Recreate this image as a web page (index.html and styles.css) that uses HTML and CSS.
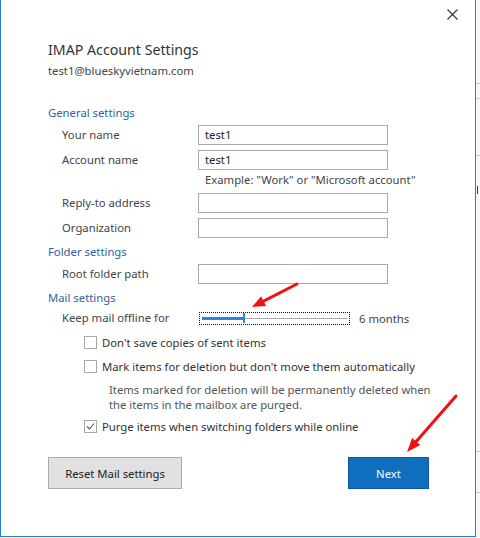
FILE: index.html
```html
<!DOCTYPE html>
<html>
<head>
<meta charset="utf-8">
<link rel="stylesheet" href="styles.css">
</head>
<body>
<div class="screen">
  <div class="dialog">
    <div class="topbar">
      <svg class="close" width="11" height="11" viewBox="0 0 11 11"><path d="M0.5 0.5 L10.5 10.5 M10.5 0.5 L0.5 10.5" stroke="#333" stroke-width="1.1" fill="none"/></svg>
    </div>
    <div class="content">
      <h1 class="title">IMAP Account Settings</h1>
      <div class="email">test1@blueskyvietnam.com</div>

      <div class="section sec-general">General settings</div>
      <div class="field first"><span class="label">Your name</span><div class="input">test1</div></div>
      <div class="field"><span class="label">Account name</span><div class="input">test1</div></div>
      <div class="hint">Example: "Work" or "Microsoft account"</div>
      <div class="field"><span class="label">Reply-to address</span><div class="input"></div></div>
      <div class="field"><span class="label">Organization</span><div class="input"></div></div>

      <div class="section">Folder settings</div>
      <div class="field first"><span class="label">Root folder path</span><div class="input"></div></div>

      <div class="section">Mail settings</div>
      <div class="slider-row">
        <span class="label">Keep mail offline for</span>
        <div class="slider">
          <div class="fill"></div><div class="thumb"></div><div class="track"></div>
        </div>
        <span class="value">6 months</span>
      </div>
      <div class="check first-check"><span class="box"></span><span>Don't save copies of sent items</span></div>
      <div class="check"><span class="box"></span><span>Mark items for deletion but don't move them automatically</span></div>
      <div class="note"><div>Items marked for deletion will be permanently deleted when</div><div>the items in the mailbox are purged.</div></div>
      <div class="check checked"><span class="box"><svg width="11" height="11" viewBox="0 0 11 11"><path d="M2 5.5 L4.5 8 L9 2.5" stroke="#555" stroke-width="1.1" fill="none"/></svg></span><span>Purge items when switching folders while online</span></div>

      <div class="buttons">
        <button class="btn reset">Reset Mail settings</button>
        <button class="btn next">Next</button>
      </div>
    </div>
  </div>
  <div class="behind"></div>
  <svg class="annotations" width="480" height="538" viewBox="0 0 480 538">
    <line x1="297" y1="284" x2="263.6" y2="301.1" stroke="#f21010" stroke-width="3" stroke-linecap="round"/>
    <polygon points="252,307 266.1,306 261.1,296.2" fill="#f21010"/>
    <line x1="456" y1="396" x2="416.2" y2="441.5" stroke="#f21010" stroke-width="3" stroke-linecap="round"/>
    <polygon points="407,452 420.3,445.1 412.1,437.9" fill="#f21010"/>
  </svg>
</div>
</body>
</html>
```
FILE: styles.css
```css
* { box-sizing: border-box; }
html, body { margin: 0; padding: 0; }
body {
  background: #ffffff;
  font-family: "Segoe UI", "Noto Sans", "Open Sans", sans-serif;
  font-size: 11.3px;
  color: #444;
}
.screen {
  position: relative;
  width: 480px;
  height: 538px;
  display: flex;
  overflow: hidden;
}
.dialog {
  width: 476px;
  height: 537px;
  flex: none;
  background: #fff;
  border: 1px solid #2a7ad0;
  border-top: none;
}
.behind {
  flex: 1;
  background:
    linear-gradient(#c8c8c8, #c8c8c8) 0 83px / 100% 1px no-repeat,
    linear-gradient(#c8c8c8, #c8c8c8) 0 98px / 100% 1px no-repeat,
    linear-gradient(#c8c8c8, #c8c8c8) 0 155px / 100% 1px no-repeat,
    linear-gradient(#7a1b4a, #7a1b4a) 1px 186px / 1px 8px no-repeat,
    linear-gradient(#c8c8c8, #c8c8c8) 0 451px / 100% 1px no-repeat,
    linear-gradient(#c8c8c8, #c8c8c8) 0 492px / 100% 1px no-repeat,
    #f7f7f7;
}
.topbar {
  height: 39px;
  display: flex;
  justify-content: flex-end;
  align-items: flex-start;
  padding: 9px 17px 0 0;
}
.close { display: block; }
.content {
  padding: 0 46px 0 47px;
}
.title {
  margin: 0;
  height: 21px;
  line-height: 21px;
  font-size: 14.2px;
  font-weight: 400;
  color: #333;
}
.email {
  margin-top: 2px;
  height: 18px;
  line-height: 18px;
  color: #444;
}
.section {
  margin-top: 5px;
  height: 18px;
  line-height: 17px;
  color: #2f62a3;
}
.section.sec-general { margin-top: 24px; }
.field {
  margin-top: 5px;
  margin-left: 14px;
  display: grid;
  grid-template-columns: 136px 190px;
  align-items: center;
  height: 20px;
}
.field.first { margin-top: 3px; }
.label { color: #444; white-space: nowrap; line-height: 18px; }
.input {
  height: 20px;
  border: 1px solid #a9a9a9;
  padding: 0 6px;
  line-height: 18px;
  color: #222;
}
.hint {
  margin-top: 2px;
  height: 16px;
  line-height: 16px;
  padding-left: 157px;
  color: #444;
  white-space: nowrap;
}
.slider-row {
  margin-top: 2px;
  margin-left: 14px;
  height: 18px;
  display: grid;
  grid-template-columns: 137px 151px auto;
  align-items: center;
}
.slider {
  position: relative;
  height: 13px;
  border: 1px dotted #111;
  display: flex;
  align-items: center;
  padding: 0 2px;
}
.fill { width: 41px; height: 3px; background: #2b88d8; }
.thumb { width: 2px; height: 10px; background: #2b88d8; }
.track { flex: 1; height: 1px; background: #aaa; }
.value { padding-left: 9px; color: #444; }
.check {
  margin-top: 6px;
  margin-left: 36px;
  height: 18px;
  display: flex;
  align-items: center;
  gap: 5px;
  color: #333;
  white-space: nowrap;
}
.box {
  width: 13px;
  height: 13px;
  border: 1px solid #a8a8a8;
  background: #fff;
  display: flex;
  align-items: center;
  justify-content: center;
  flex: none;
}
.box svg { display: block; }
.note {
  margin-top: 7px;
  margin-left: 61px;
  line-height: 15px;
  color: #555;
  white-space: nowrap;
}
.checked { margin-top: 5px; }
.buttons {
  margin-top: 22px;
  display: flex;
  justify-content: space-between;
}
.btn {
  height: 32px;
  font-family: inherit;
  font-size: 11.3px;
  padding: 0;
}
.reset {
  width: 134px;
  background: #e1e1e1;
  border: 1px solid #adadad;
  color: #222;
}
.next {
  width: 81px;
  background: #106ebe;
  border: 1px solid #0b5a9e;
  color: #fff;
}
.annotations {
  position: absolute;
  left: 0;
  top: 0;
  pointer-events: none;
}
```
